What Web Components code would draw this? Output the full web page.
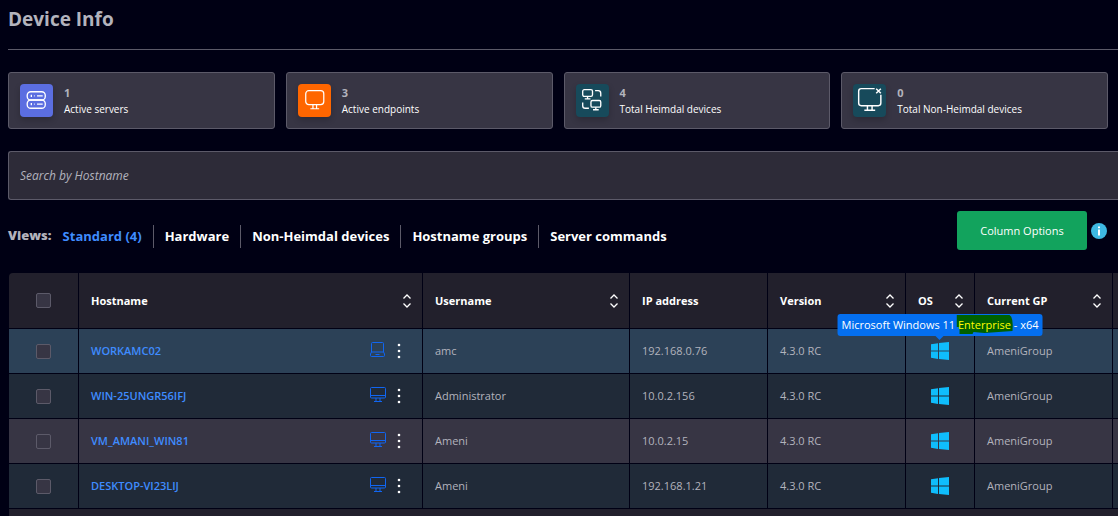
<!DOCTYPE html>
<html lang="en">
<head>
<meta charset="utf-8">
<title>Device Info</title>
<style>
html{background:#000014}
body{margin:0;background:#000014;color:#b3b3bd;font-family:"Open Sans","Noto Sans",sans-serif;font-size:12px;line-height:16px;overflow-x:hidden}
</style>
</head>
<body>
<device-page>
  <span slot="title">Device Info</span>
  <stat-card slot="stats" icon="server" style="--tile:#5b6ee1"><span slot="value">1</span>Active servers</stat-card>
  <stat-card slot="stats" icon="monitor" style="--tile:#ff6600"><span slot="value">3</span>Active endpoints</stat-card>
  <stat-card slot="stats" icon="devices" style="--tile:#174a5b"><span slot="value">4</span>Total Heimdal devices</stat-card>
  <stat-card slot="stats" icon="monitor-x" style="--tile:#174a5b"><span slot="value">0</span>Total Non-Heimdal devices</stat-card>
  <search-box slot="search" placeholder="Search by Hostname"></search-box>
  <view-tabs slot="toolbar"></view-tabs>
  <column-options slot="toolbar">Column Options</column-options>
  <device-table slot="table"></device-table>
</device-page>
<script>
const ICONS = {
  server: ['0 0 32 32', '<g fill="none" stroke="#fff" stroke-width="1.3"><rect x="7" y="7.500" width="17.500" height="8" rx="3.500"/><rect x="7" y="15.500" width="17.500" height="8" rx="3.500"/><path d="M11 10.500v2M11 18.500v2M13.500 11.500h.8M13.500 19.500h.8M16.500 11.500h5.500M16.500 19.500h5.500"/></g>'],
  monitor: ['0 0 32 32', '<g fill="none" stroke="#fff" stroke-width="1.200"><rect x="7.500" y="6.500" width="17.500" height="13.500" rx="3"/><path d="M14.500 20v4M18 20v4M12 24h8.500"/></g>'],
  devices: ['0 0 32 32', '<g fill="none" stroke="#fff" stroke-width="1.300"><rect x="6.500" y="5.500" width="9.500" height="6.500" rx="1.500"/><path d="M11.200 12v2.500M8.500 14.500h5.500"/><rect x="14.500" y="16" width="9.500" height="6.500" rx="1.500"/><path d="M19.200 22.500v2.500M16.500 25h5.500M18.500 6.500h3q2.500 0 2.500 2.500v3M6.500 18v3q0 2.500 2.500 2.500h3.500"/></g>'],
  'monitor-x': ['0 0 32 32', '<g fill="none" stroke="#fff" stroke-width="1.400"><path d="M21 4.500H8Q5.500 4.500 5.500 7V18.500Q5.500 21 8 21H24.500Q27 21 27 18.500V10.500M14 21v4.500M18.500 21v4.500M11 25.500h10.500M22.500 4.500l4.500 4.500M27 4.500l-4.500 4.500"/></g>'],
  sort: ['0 0 10 16', '<path d="M1.500 5.500L5 2l3.500 3.500M1.500 10.500L5 14l3.500-3.500" fill="none" stroke="#fff" stroke-width="1.300"/>'],
  laptop: ['0 0 18 18', '<path d="M3.500 1.500h10q1 0 1 1v8.500h-12V2.500q0-1 1-1zM2.500 11L1.500 13v1.500q0 1 1 1h12q1 0 1-1V13L14.500 11M6.500 13.500h4" fill="none" stroke="#1166f2"/>'],
  desktop: ['0 0 18 18', '<path d="M2.500 1.500h13q1 0 1 1v8.500q0 1-1 1h-13q-1 0-1-1V2.500q0-1 1-1zM1.500 9.500h15M7 12v3.500M11 12v3.500M5 15.500h8" fill="none" stroke="#1166f2"/>'],
  kebab: ['0 0 4 16', '<g fill="#fff"><circle cx="2" cy="2" r="1.300"/><circle cx="2" cy="8" r="1.300"/><circle cx="2" cy="14" r="1.300"/></g>'],
  windows: ['0 0 18 18', '<g fill="#0fbdfc"><path d="M0 2.200L7 1.200V8.600H0zM8 1.100L18 0V8.600H8zM0 9.500H7V17L0 15.800zM8 9.500H18V18L8 17z"/></g>'],
  info: ['0 0 16 16', '<circle cx="8" cy="8" r="8" fill="#3eb8e2"/><path d="M7 3.600h2v1.700h-2zM7 6.500h2V12.500h-2z" fill="#fff"/>']
};
class Base extends HTMLElement {
  render(css, html) {
    this.attachShadow({mode: 'open'}).innerHTML = `<style>*{box-sizing:border-box}${css}</style>${html}`;
  }
}
customElements.define('hd-icon', class extends Base {
  connectedCallback() {
    if (this.shadowRoot) return;
    const [box, art] = ICONS[this.getAttribute('name')];
    this.render(':host{display:block;flex:none}svg{display:block;width:100%;height:100%}', `<svg viewBox="${box}" aria-hidden="true">${art}</svg>`);
  }
});
customElements.define('device-page', class extends Base {
  constructor() {
    super();
    this.render(`
      :host{display:block;padding-left:8px}
      h1{margin:0;padding:5px 0 16px;font-size:19px;line-height:28px;font-weight:700;border-bottom:1px solid #5c5a69}
      .stats{display:grid;grid-template-columns:repeat(4,1fr);gap:11px;margin:22px 10px 22px 0}
      .toolbar{display:flex;justify-content:space-between;align-items:flex-start;padding:11px 11px 23px 0}`,
    `<h1><slot name="title"></slot></h1>
     <div class="stats"><slot name="stats"></slot></div>
     <slot name="search"></slot>
     <div class="toolbar"><slot name="toolbar"></slot></div>
     <slot name="table"></slot>`);
  }
});
customElements.define('stat-card', class extends Base {
  connectedCallback() {
    if (this.shadowRoot) return;
    this.render(`
      :host{display:flex;align-items:center;gap:11px;height:57px;padding:0 11px;background:#373544;border:1px solid #5c5a69;border-radius:3px;box-sizing:border-box}
      .tile{width:33px;height:33px;border-radius:4px;background:var(--tile);box-shadow:0 3px 6px #0003}
      hd-icon{width:33px;height:33px}
      .value{font-weight:700;font-size:11px;line-height:16px}
      .label{color:#fff;font-size:10px;line-height:16px;font-weight:500}`,
    `<div class="tile"><hd-icon name="${this.getAttribute('icon')}"></hd-icon></div>
     <div><div class="value"><slot name="value"></slot></div><div class="label"><slot></slot></div></div>`);
  }
});
customElements.define('search-box', class extends Base {
  connectedCallback() {
    if (this.shadowRoot) return;
    const text = this.getAttribute('placeholder');
    this.render(`
      :host{display:block}
      input{display:block;width:100%;height:49px;padding:0 11px;background:#2d2b38;border:1px solid #5c5a69;border-right:0;border-radius:3px 0 0 3px;color:#fff;font:12px "Open Sans",sans-serif;outline:0}
      input::placeholder{color:#b3b3bd;font-style:italic;opacity:1}`,
    `<input type="search" placeholder="${text}" aria-label="${text}">`);
  }
});
customElements.define('view-tabs', class extends Base {
  constructor() {
    super();
    const tabs = ['Standard (4)', 'Hardware', 'Non-Heimdal devices', 'Hostname groups', 'Server commands'];
    this.render(`
      :host{display:flex;padding-top:14px;font-size:13px;line-height:23px;font-weight:700;white-space:nowrap}
      b{line-height:21px}
      nav{display:flex}
      a{padding:0 11px;color:#fff;text-decoration:none}
      a+a{border-left:1px solid #5c5a69}
      a[aria-current]{color:#3f8cff}`,
    `<b>Views:</b><nav>${tabs.map((t, i) => `<a href="#"${i ? '' : ' aria-current="page"'}>${t}</a>`).join('')}</nav>`);
  }
});
customElements.define('column-options', class extends Base {
  constructor() {
    super();
    this.render(`
      :host{display:flex;align-items:center;gap:4px}
      button{border:0;padding:0;cursor:pointer;background:none}
      .main{width:130px;height:39px;border-radius:3px;background:#12a35d;color:#fff;font:500 11px "Open Sans",sans-serif}
      hd-icon{width:16px;height:16px}`,
    `<button class="main"><slot></slot></button><button aria-label="Information"><hd-icon name="info"></hd-icon></button>`);
  }
});
customElements.define('tool-tip', class extends Base {
  constructor() {
    super();
    this.render(`
      :host{position:absolute;z-index:2;left:50%;bottom:100%;transform:translateX(-50%);padding:0 4px;border-radius:3px;background:#046ff0;color:#fff;font-size:11px;line-height:22px;font-weight:400;white-space:nowrap}
      :host::after{content:"";position:absolute;left:50%;top:100%;margin-left:-4px;border:4px solid transparent;border-top-color:#046ff0;border-bottom:0}
      ::slotted(mark){position:relative;z-index:0;background:none;color:#ff0}
      svg{position:absolute;right:29px;top:1px;width:57px;height:19px}`,
    `<svg viewBox="0 0 57 19" aria-hidden="true"><path d="M0 0H53Q57 2 56 16L28 18L17 17L16 19H3L3 12H0z" fill="#006000"/></svg><slot></slot>`);
  }
});
customElements.define('device-table', class extends Base {
  constructor() {
    super();
    const rows = [
      ['WORKAMC02', 'laptop', 'amc', '192.168.0.76'],
      ['WIN-25UNGR56IFJ', 'desktop', 'Administrator', '10.0.2.156'],
      ['VM_AMANI_WIN81', 'desktop', 'Ameni', '10.0.2.15'],
      ['DESKTOP-VI23LIJ', 'desktop', 'Ameni', '192.168.1.21']
    ];
    const heads = [['Hostname', 1], ['Username', 1], ['IP address', 0], ['Version', 1], ['OS', 1], ['Current GP', 1]];
    this.render(`
      :host{display:block;padding-left:1px}
      table{width:100%;table-layout:fixed;border-collapse:separate;border-spacing:0;font-size:11px;text-align:left;overflow:hidden;border-radius:4px 0 0 0}
      th,td{padding:0 10px 0 12px;height:45px;border-bottom:1px solid #000014;white-space:nowrap}
      th+th,td+td{border-left:1px solid #000014}
      th{height:56px;background:#22202c;color:#fff;font-weight:700}
      .c{width:69px}.u{width:207px}.m{width:138px}.o{width:69px}.e{width:6px}
      tr>.e,tr>td:last-child{padding:0}
      tr>:first-child{text-align:center;padding:0}
      input{appearance:none;display:block;margin:0 auto;width:15px;height:15px;border:1px solid #5c5a69;border-radius:2px;background:#373544}
      .split{display:flex;align-items:center;justify-content:space-between}
      th hd-icon{width:10px;height:16px}
      th button{border:0;padding:0;background:none}
      tbody tr{background:#202a38}
      tbody tr:first-child{background:#2c4157}
      tbody tr:nth-child(3){background:#373544}
      a{color:#3f8cff;font-weight:600;text-decoration:none}
      .tools{display:flex;align-items:center;gap:10px;padding-right:11px}
      .tools button{border:0;padding:0;background:none}
      .device{width:18px;height:18px;margin-bottom:2px}
      .kebab{width:4px;height:16px}
      .os{position:relative;width:18px;margin:0 auto}
      .os hd-icon{width:18px;height:18px}
      .os tool-tip{margin-bottom:6px}
      tr>td.osc{padding:0}
      tfoot td{height:20px;border:0;background:#22202c}`,
    `<table><thead><tr><th class="c"><input type="checkbox" aria-label="Select all devices"></th>${heads.map(([h, s], i) =>
      `<th class="${['', 'u', 'm', 'm', 'o', 'm'][i]}"><div class="split"><span>${h}</span>${s ? `<button aria-label="Sort by ${h}"><hd-icon name="sort"></hd-icon></button>` : ''}</div></th>`).join('')}<th class="e"></th></tr></thead>
     <tbody>${rows.map(([host, icon, user, ip], i) => `<tr>
      <td><input type="checkbox" aria-label="Select ${host}"></td>
      <td><div class="split"><a href="#">${host}</a><div class="tools"><hd-icon class="device" name="${icon}"></hd-icon><button aria-label="Actions for ${host}"><hd-icon class="kebab" name="kebab"></hd-icon></button></div></div></td>
      <td>${user}</td><td>${ip}</td><td>4.3.0 RC</td>
      <td class="osc"><div class="os"><hd-icon name="windows"></hd-icon>${i ? '' : '<tool-tip>Microsoft Windows 11 <mark>Enterprise</mark> - x64</tool-tip>'}</div></td>
      <td>AmeniGroup</td><td></td></tr>`).join('')}</tbody>
     <tfoot><tr><td colspan="8"></td></tr></tfoot></table>`);
  }
});
</script>
</body>
</html>
